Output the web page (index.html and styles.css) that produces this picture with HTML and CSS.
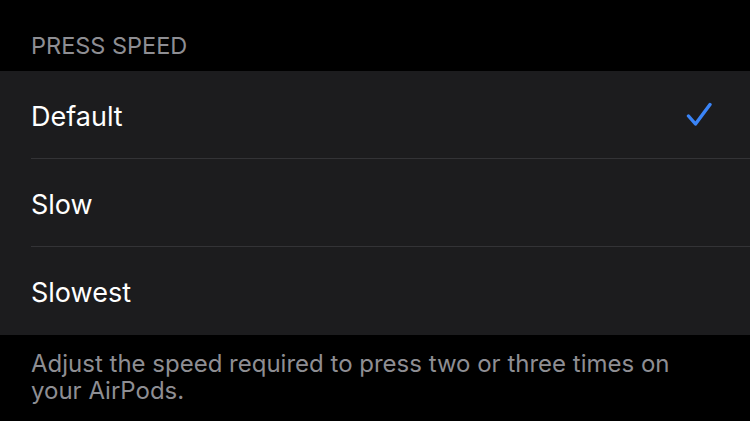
FILE: index.html
```html
<!DOCTYPE html>
<html>
<head>
<meta charset="utf-8">
<link rel="stylesheet" href="styles.css">
</head>
<body>
<div class="screen">
  <div class="section-header">PRESS SPEED</div>
  <div class="group">
    <div class="row">
      <span class="label">Default</span>
      <svg class="check" width="26" height="25" viewBox="0 0 26 25">
        <path d="M2.5 14 L9.5 22 L24 2.5" fill="none" stroke="#3a84f7" stroke-width="3.4" stroke-linecap="round" stroke-linejoin="round"/>
      </svg>
    </div>
    <div class="row">
      <span class="label">Slow</span>
    </div>
    <div class="row">
      <span class="label">Slowest</span>
    </div>
  </div>
  <div class="footer">Adjust the speed required to press two or three times on your AirPods.</div>
</div>
</body>
</html>
```
FILE: styles.css
```css
html, body {
  margin: 0;
  padding: 0;
  background: #000;
}
.screen {
  width: 750px;
  height: 421px;
  overflow: hidden;
  font-family: Inter, "Noto Sans", sans-serif;
  background: #000;
}
.section-header {
  color: #8e8e93;
  font-size: 23.5px;
  padding: 32px 31px 0;
  height: 39px;
  line-height: 28px;
}
.group {
  background: #1c1c1e;
  padding-left: 31px;
}
.row {
  height: 88px;
  display: flex;
  align-items: center;
  justify-content: space-between;
  padding: 3px 38px 0 0;
  border-bottom: 1px solid #333336;
  box-sizing: border-box;
}
.row:last-child {
  border-bottom: none;
}
.label {
  color: #fff;
  font-size: 27px;
}
.check {
  display: block;
  margin-top: -3px;
}
.footer {
  color: #8e8e93;
  font-size: 24px;
  line-height: 27px;
  padding: 15px 0 0 31px;
  max-width: 660px;
}
```
